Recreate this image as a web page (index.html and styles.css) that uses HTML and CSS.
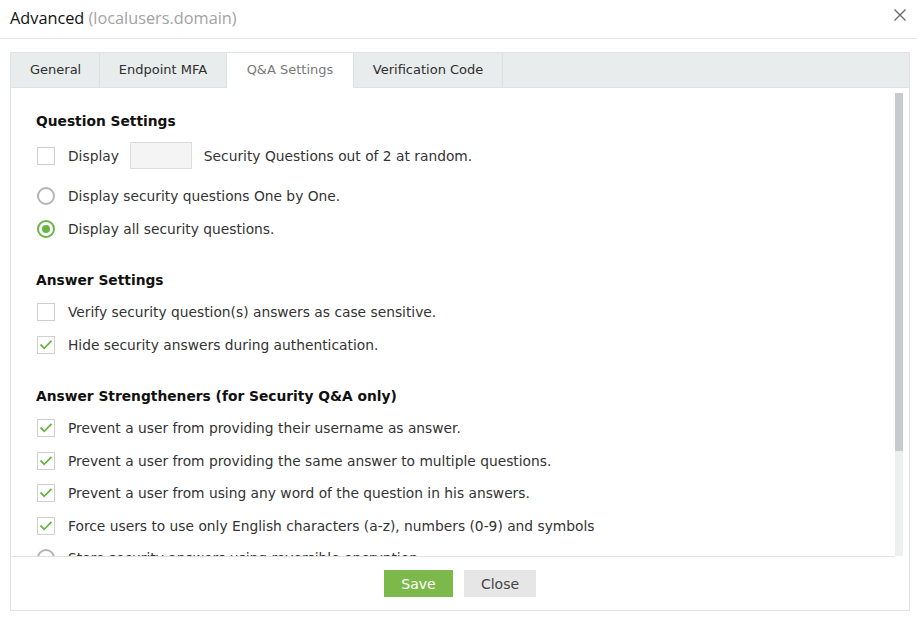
FILE: index.html
```html
<!DOCTYPE html>
<html>
<head>
<meta charset="utf-8">
<link rel="stylesheet" href="styles.css">
</head>
<body>
<div class="header">
  <div class="title">Advanced <span class="sub">(localusers.domain)</span></div>
  <svg class="close-x" width="12" height="12" viewBox="0 0 12 12"><path d="M0.5 0.5 L11.5 11.5 M11.5 0.5 L0.5 11.5" stroke="#6b6b6b" stroke-width="1.4" fill="none"/></svg>
</div>
<div class="panel">
  <div class="tabs">
    <div class="tab">General</div>
    <div class="tab">Endpoint MFA</div>
    <div class="tab active">Q&amp;A Settings</div>
    <div class="tab">Verification Code</div>
    <div class="tab-fill"></div>
  </div>
  <div class="body">
    <div class="scroll">
      <div class="section">
        <div class="heading">Question Settings</div>
        <div class="row row-input">
          <span class="cb"></span>
          <span class="lbl">Display</span>
          <span class="num"></span>
          <span class="lbl">Security Questions out of 2 at random.</span>
        </div>
        <div class="row"><span class="rd"></span><span class="lbl">Display security questions One by One.</span></div>
        <div class="row"><span class="rd on"></span><span class="lbl">Display all security questions.</span></div>
      </div>
      <div class="section">
        <div class="heading">Answer Settings</div>
        <div class="row"><span class="cb"></span><span class="lbl">Verify security question(s) answers as case sensitive.</span></div>
        <div class="row"><span class="cb"><svg width="18" height="18" viewBox="0 0 18 18"><path d="M3.5 8.5 L7.2 12.3 L14.5 4.8" stroke="#6ab446" stroke-width="1.8" fill="none"/></svg></span><span class="lbl">Hide security answers during authentication.</span></div>
      </div>
      <div class="section">
        <div class="heading">Answer Strengtheners (for Security Q&amp;A only)</div>
        <div class="row"><span class="cb"><svg width="18" height="18" viewBox="0 0 18 18"><path d="M3.5 8.5 L7.2 12.3 L14.5 4.8" stroke="#6ab446" stroke-width="1.8" fill="none"/></svg></span><span class="lbl">Prevent a user from providing their username as answer.</span></div>
        <div class="row"><span class="cb"><svg width="18" height="18" viewBox="0 0 18 18"><path d="M3.5 8.5 L7.2 12.3 L14.5 4.8" stroke="#6ab446" stroke-width="1.8" fill="none"/></svg></span><span class="lbl">Prevent a user from providing the same answer to multiple questions.</span></div>
        <div class="row"><span class="cb"><svg width="18" height="18" viewBox="0 0 18 18"><path d="M3.5 8.5 L7.2 12.3 L14.5 4.8" stroke="#6ab446" stroke-width="1.8" fill="none"/></svg></span><span class="lbl">Prevent a user from using any word of the question in his answers.</span></div>
        <div class="row"><span class="cb"><svg width="18" height="18" viewBox="0 0 18 18"><path d="M3.5 8.5 L7.2 12.3 L14.5 4.8" stroke="#6ab446" stroke-width="1.8" fill="none"/></svg></span><span class="lbl">Force users to use only English characters (a-z), numbers (0-9) and symbols</span></div>
        <div class="row"><span class="rd"></span><span class="lbl">Store security answers using reversible encryption.</span></div>
      </div>
    </div>
    <div class="scrollbar"><div class="thumb"></div></div>
  </div>
  <div class="footer">
    <button class="btn save">Save</button>
    <button class="btn close">Close</button>
  </div>
</div>
</body>
</html>
```
FILE: styles.css
```css
html, body {
  margin: 0;
  padding: 0;
  background: #ffffff;
}
body {
  font-family: "DejaVu Sans", Verdana, sans-serif;
  font-size: 13px;
  color: #333333;
  width: 917px;
  height: 617px;
  overflow: hidden;
}
.header {
  height: 38px;
  border-bottom: 1px solid #e6e6e6;
  display: flex;
  justify-content: space-between;
  align-items: flex-start;
  padding: 0 11px 0 10px;
}
.title {
  font-family: "Open Sans", sans-serif;
  font-size: 16.3px;
  line-height: 36px;
  color: #111111;
}
.title .sub {
  color: #a3a3a3;
}
.close-x {
  margin-top: 9px;
}
.panel {
  margin: 13px 7px 0 10px;
  border: 1px solid #e2e2e2;
  display: flex;
  flex-direction: column;
}
.tabs {
  display: flex;
  height: 35px;
  background: #e9ecec;
}
.tab {
  height: 34px;
  line-height: 34px;
  padding: 0 18.5px;
  border-right: 1px solid #dde0e0;
  border-bottom: 1px solid #dfe2e2;
  color: #2e2e2e;
  white-space: nowrap;
}
.tab:first-child {
  padding: 0 18px 0 19px;
}
.tab.active {
  background: #ffffff;
  color: #7a7a7a;
  border-bottom-color: #ffffff;
  padding: 0 20px;
}
.tab-fill {
  flex: 1;
  border-bottom: 1px solid #dfe2e2;
}
.body {
  display: flex;
  height: 469px;
}
.scroll {
  flex: 1;
  overflow: hidden;
  border-bottom: 1px solid #e2e2e2;
  padding: 17px 0 0 25px;
  box-sizing: border-box;
  height: 469px;
  font-size: 13.8px;
}
.scrollbar {
  width: 8px;
  margin: 5px 6px 1px 0;
  background: #eef0f0;
  display: flex;
  flex-direction: column;
}
.thumb {
  height: 358px;
  background: #c8cbcb;
}
.section + .section {
  margin-top: 19px;
}
.heading {
  height: 32px;
  line-height: 32px;
  font-weight: bold;
  color: #111111;
}
.row {
  height: 32.5px;
  display: flex;
  align-items: center;
  white-space: nowrap;
}
.row-input {
  height: 37px;
  margin-bottom: 6px;
}
.cb {
  width: 18px;
  height: 18px;
  box-sizing: border-box;
  border: 1px solid #cfcfcf;
  background: #ffffff;
  margin: 0 13px 0 1px;
  flex: none;
  position: relative;
}
.cb svg {
  position: absolute;
  left: -1px;
  top: -1px;
}
.rd {
  width: 18px;
  height: 18px;
  box-sizing: border-box;
  border: 2px solid #b4b4b4;
  border-radius: 50%;
  margin: 0 13px 0 1px;
  flex: none;
  display: flex;
  align-items: center;
  justify-content: center;
}
.rd.on {
  border-color: #6ab446;
}
.rd.on::after {
  content: "";
  width: 8px;
  height: 8px;
  border-radius: 50%;
  background: #6ab446;
}
.num {
  width: 62px;
  height: 27px;
  box-sizing: border-box;
  border: 1px solid #dcdcdc;
  background: #f4f4f4;
  margin: 0 12px 0 11px;
  flex: none;
}
.footer {
  height: 53px;
  display: flex;
  justify-content: center;
  align-items: flex-start;
  gap: 11px;
  padding-top: 13px;
  box-sizing: border-box;
}
.btn {
  height: 27px;
  border: none;
  font-family: "DejaVu Sans", Verdana, sans-serif;
  font-size: 14px;
  padding: 0;
  cursor: pointer;
}
.btn.save {
  width: 69px;
  background: #7cb94a;
  color: #ffffff;
}
.btn.close {
  width: 72px;
  background: #e6e6e6;
  color: #444444;
}
```
